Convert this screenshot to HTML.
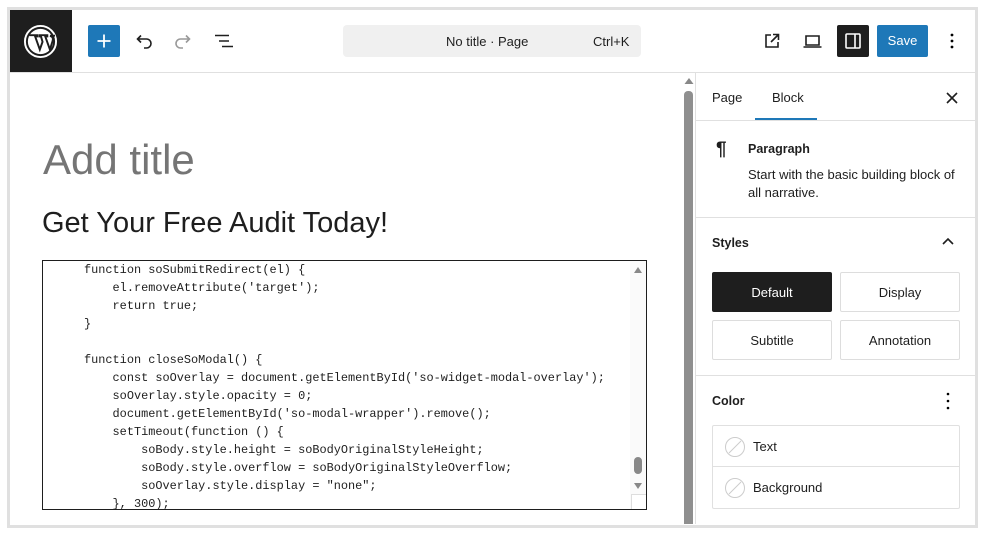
<!DOCTYPE html>
<html><head><style>
*{box-sizing:border-box;margin:0;padding:0}
body{width:985px;height:534px;background:#fff;font-family:"Liberation Sans",sans-serif;color:#1e1e1e;position:relative;overflow:hidden}
.a{position:absolute}
.frame{left:7px;top:7px;width:971px;height:521px;border:3px solid #e0e0e0}
.t{font-size:13px;white-space:nowrap}
.btn{position:absolute;border:1px solid #ddd;border-radius:2px;font-size:13px;display:flex;align-items:center;justify-content:center}
pre{font-family:"Liberation Mono",monospace;font-size:11.9px;line-height:18px;color:#1e1e1e}
</style></head><body>
<div class="a frame"></div>
<!-- header -->
<div class="a" style="left:10px;top:10px;width:62px;height:63px;background:#1e1e1e"></div>
<svg class="a" style="left:23px;top:24px" width="35" height="35" viewBox="0 0 36 36"><circle cx="18" cy="18" r="16" fill="none" stroke="#fff" stroke-width="2"/><circle cx="18" cy="18" r="13" fill="#fff"/><path d="M6.5 11.5h8v1.3h-2l4.8 13.5 2.8-8-1.6-5.5h-1.7v-1.3h8.2v1.3h-2.1l4.8 13.5 2.7-8.6c1-3.4-.5-4.8-1.8-5.2l.1-0.5h4.2" fill="none" stroke="#1e1e1e" stroke-width="2"/></svg>
<div class="a" style="left:10px;top:72px;width:965px;height:1px;background:#e0e0e0"></div>
<div class="a" style="left:88px;top:25px;width:32px;height:32px;background:#1e78b8;border-radius:2px"></div>
<svg class="a" style="left:94px;top:31px" width="20" height="20"><path d="M10 3.5v13M3.5 10h13" stroke="#fff" stroke-width="1.8"/></svg>
<svg class="a" style="left:134px;top:31px" width="20" height="20"><path d="M3.5 8h9a4.5 4.5 0 0 1 0 9H10M7 4.5L3.5 8 7 11.5" fill="none" stroke="#1e1e1e" stroke-width="1.6"/></svg>
<svg class="a" style="left:173px;top:31px" width="20" height="20"><path d="M16.5 8h-9a4.5 4.5 0 0 0 0 9H10M13 4.5L16.5 8 13 11.5" fill="none" stroke="#999" stroke-width="1.6"/></svg>
<svg class="a" style="left:213px;top:31px" width="22" height="20"><path d="M2 4.5h14M6 10h10M9 15.5h11" stroke="#1e1e1e" stroke-width="1.6"/></svg>
<div class="a" style="left:343px;top:25px;width:298px;height:32px;background:#f0f0f0;border-radius:4px"></div>
<div class="a t" style="left:446px;top:34px;color:#1e1e1e">No title · Page</div>
<div class="a t" style="left:593px;top:34px;color:#1e1e1e">Ctrl+K</div>
<svg class="a" style="left:762px;top:31px" width="20" height="20"><path d="M9 4H4v12h12v-5M11 3.5h5.5V9M16.5 3.5L9 11" fill="none" stroke="#1e1e1e" stroke-width="1.6"/></svg>
<svg class="a" style="left:802px;top:31px" width="22" height="20"><path d="M4 5h13v9H4zM1.5 16h18" fill="none" stroke="#1e1e1e" stroke-width="1.6"/></svg>
<div class="a" style="left:837px;top:25px;width:32px;height:32px;background:#1e1e1e;border-radius:2px"></div>
<svg class="a" style="left:843px;top:31px" width="20" height="20"><rect x="3" y="3" width="14" height="14" rx="1" fill="none" stroke="#fff" stroke-width="1.6"/><path d="M12 3v14" stroke="#fff" stroke-width="1.6"/></svg>
<div class="a" style="left:877px;top:25px;width:51px;height:32px;background:#1e78b8;border-radius:2px;color:#fff;font-size:13px;text-align:center;line-height:32px">Save</div>
<svg class="a" style="left:946px;top:31px" width="12" height="20"><circle cx="6" cy="4" r="1.4"/><circle cx="6" cy="10" r="1.4"/><circle cx="6" cy="16" r="1.4"/></svg>
<!-- editor -->
<div class="a" style="left:43px;top:136px;font-size:42px;color:#757575">Add title</div>
<div class="a" style="left:42px;top:207px;font-size:29px;color:#1e1e1e">Get Your Free Audit Today!</div>
<div class="a" style="left:42px;top:260px;width:605px;height:250px;border:1px solid #1e1e1e;overflow:hidden;background:#fff">
<pre style="position:absolute;left:41px;top:0px">function soSubmitRedirect(el) {
    el.removeAttribute('target');
    return true;
}

function closeSoModal() {
    const soOverlay = document.getElementById('so-widget-modal-overlay');
    soOverlay.style.opacity = 0;
    document.getElementById('so-modal-wrapper').remove();
    setTimeout(function () {
        soBody.style.height = soBodyOriginalStyleHeight;
        soBody.style.overflow = soBodyOriginalStyleOverflow;
        soOverlay.style.display = "none";
    }, 300);</pre>
<div class="a" style="left:587px;top:0;width:17px;height:249px;background:#fafafa"></div>
<svg class="a" style="left:589px;top:4px" width="12" height="10"><path d="M2 8h8L6 2z" fill="#888"/></svg>
<div class="a" style="left:591px;top:196px;width:8px;height:17px;background:#888;border-radius:4px"></div>
<svg class="a" style="left:589px;top:220px" width="12" height="10"><path d="M2 2h8L6 8z" fill="#888"/></svg>
<div class="a" style="left:588px;top:233px;width:16px;height:16px;border:1px solid #ddd;background:#fff"></div>
</div>
<!-- page scrollbar -->
<svg class="a" style="left:683px;top:76px" width="12" height="10"><path d="M1.5 8h9L6 2z" fill="#888"/></svg>
<div class="a" style="left:684px;top:91px;width:9px;height:433px;background:#8f8f8f;border-radius:4px 4px 0 0"></div>
<!-- sidebar -->
<div class="a" style="left:695px;top:73px;width:1px;height:451px;background:#e0e0e0"></div>
<div class="a t" style="left:712px;top:90px">Page</div>
<div class="a t" style="left:772px;top:90px">Block</div>
<div class="a" style="left:755px;top:118px;width:62px;height:2px;background:#1e78b8"></div>
<svg class="a" style="left:944px;top:90px" width="16" height="16"><path d="M3 3l10 10M13 3L3 13" stroke="#1e1e1e" stroke-width="1.6"/></svg>
<div class="a" style="left:696px;top:120px;width:279px;height:1px;background:#e0e0e0"></div>
<div class="a" style="left:716px;top:139px;font-size:19px;font-weight:bold">¶</div>
<div class="a t" style="left:748px;top:142px;font-weight:bold;font-size:12.5px">Paragraph</div>
<div class="a" style="left:748px;top:166px;font-size:13px;line-height:18px;width:215px">Start with the basic building block of all narrative.</div>
<div class="a" style="left:696px;top:217px;width:279px;height:1px;background:#e0e0e0"></div>
<div class="a t" style="left:712px;top:236px;font-weight:bold;font-size:12.5px">Styles</div>
<svg class="a" style="left:940px;top:234px" width="16" height="16"><path d="M3 10l5-5 5 5" fill="none" stroke="#1e1e1e" stroke-width="1.6"/></svg>
<div class="btn" style="left:712px;top:272px;width:120px;height:40px;background:#1e1e1e;color:#fff;border-color:#1e1e1e">Default</div>
<div class="btn" style="left:840px;top:272px;width:120px;height:40px">Display</div>
<div class="btn" style="left:712px;top:320px;width:120px;height:40px">Subtitle</div>
<div class="btn" style="left:840px;top:320px;width:120px;height:40px">Annotation</div>
<div class="a" style="left:696px;top:375px;width:279px;height:1px;background:#e0e0e0"></div>
<div class="a t" style="left:712px;top:394px;font-weight:bold;font-size:12.5px">Color</div>
<svg class="a" style="left:942px;top:391px" width="12" height="20"><circle cx="6" cy="3" r="1.3"/><circle cx="6" cy="10" r="1.3"/><circle cx="6" cy="17" r="1.3"/></svg>
<div class="a" style="left:712px;top:425px;width:248px;height:84px;border:1px solid #e0e0e0;border-radius:2px"></div>
<div class="a" style="left:713px;top:466px;width:246px;height:1px;background:#e0e0e0"></div>
<svg class="a" style="left:724px;top:436px" width="22" height="22"><circle cx="11" cy="11" r="9.5" fill="none" stroke="#ccc"/><path d="M5 17L17 5" stroke="#ccc"/></svg>
<svg class="a" style="left:724px;top:477px" width="22" height="22"><circle cx="11" cy="11" r="9.5" fill="none" stroke="#ccc"/><path d="M5 17L17 5" stroke="#ccc"/></svg>
<div class="a t" style="left:753px;top:439px">Text</div>
<div class="a t" style="left:753px;top:480px">Background</div>
</body></html>
